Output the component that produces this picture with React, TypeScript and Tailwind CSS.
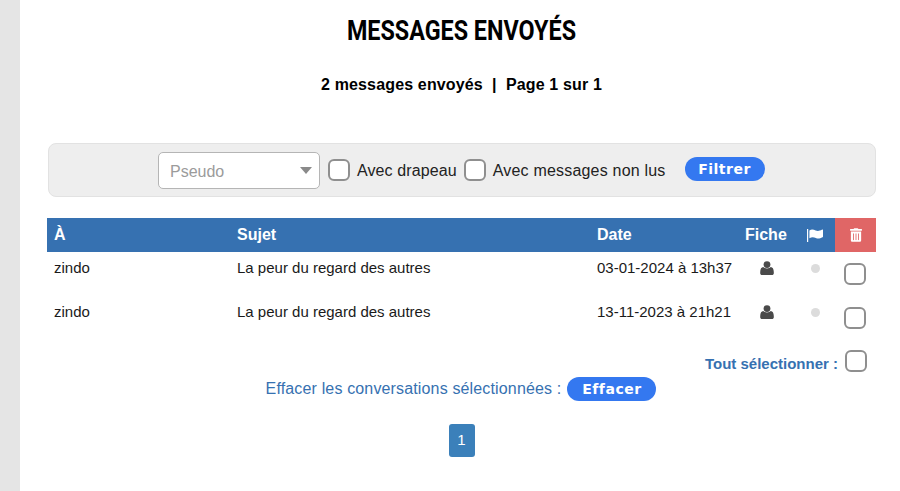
import { FaTrashAlt } from 'react-icons/fa'

const rows = [
  { to: 'zindo', subject: 'La peur du regard des autres', date: '03-01-2024 à 13h37' },
  { to: 'zindo', subject: 'La peur du regard des autres', date: '13-11-2023 à 21h21' },
]

function Check({ className = '' }: { className?: string }) {
  return (
    <span
      className={`block h-[22px] w-[22px] shrink-0 rounded-[6px] border-2 border-[#8f8f8f] bg-white ${className}`}
    />
  )
}

function PillButton({ label, width }: { label: string; width: string }) {
  return (
    <button
      className={`h-[24px] ${width} rounded-full bg-[#3478f0] text-center font-['DejaVu_Sans',sans-serif] text-[14px] font-bold leading-[24px] tracking-[0.5px] text-white`}
    >
      {label}
    </button>
  )
}

function FlagIcon() {
  return (
    <svg viewBox="0 0 16 13" className="h-[13px] w-[16px]" fill="currentColor">
      <rect x="0" y="0" width="1.2" height="13" />
      <path d="M2.4 1.4c2.6-1.6 4.4-.6 6.2.1 2 .8 3.8.7 6.6-.9.5-.3.8 0 .8.4v6.4c0 .4-.2.6-.5.8-2.8 1.7-4.8 1.6-6.7.8-1.8-.7-3.6-1.4-6.4.2z" />
    </svg>
  )
}

function UserIcon() {
  return (
    <svg viewBox="0 0 14 14" className="h-[14px] w-[14px] text-[#4a4a4a]" fill="currentColor">
      <circle cx="7" cy="3.6" r="3.4" />
      <path d="M0.2 11c0-3.2 1.3-4.8 3-5 .9.9 2.2 1.4 3.8 1.4s2.9-.5 3.8-1.4c1.7.2 3 1.8 3 5v1.2c0 1-.8 1.8-1.8 1.8H2c-1 0-1.8-.8-1.8-1.8z" />
    </svg>
  )
}

export default function App() {
  return (
    <div className="flex h-[491px] w-[900px] overflow-hidden bg-white font-['Liberation_Sans',Arial,sans-serif] text-black">
      <div className="w-[20px] shrink-0 bg-[#e5e5e5]" />

      <main className="flex w-[856px] flex-col pl-[27px]">
        <h1 className="mt-[15px] h-[32px] w-[829px] scale-x-[0.833] text-center font-['Roboto',sans-serif] text-[28px] font-bold leading-[32px]">
          MESSAGES ENVOYÉS
        </h1>

        <p className="mt-[29px] h-[18px] w-[829px] text-center text-[16px] font-bold leading-[18px] tracking-[0.15px]">
          2 messages envoyés&nbsp; |&nbsp; Page 1 sur 1
        </p>

        <form className="mt-[49px] ml-[1px] flex h-[54px] w-[828px] items-center rounded-[8px] border-[1.5px] border-[#e2e2e2] bg-[#eeeeee] pl-[109px]">
          <div className="flex h-[37px] w-[162px] items-center justify-between rounded-[5px] border-[1.5px] border-[#b5b5b5] bg-white pl-[11px] pr-[7px]">
            <span className="pt-[3px] text-[16px] text-[#9b9b9b]">Pseudo</span>
            <span className="h-0 w-0 border-x-[6px] border-t-[7px] border-x-transparent border-t-[#8a8a8a]" />
          </div>
          <Check className="ml-[8px]" />
          <span className="ml-[7px] pt-[1px] text-[16px] tracking-[0.1px] text-[#222222]">Avec drapeau</span>
          <Check className="ml-[7px]" />
          <span className="ml-[7px] pt-[1px] text-[16px] tracking-[0.2px] text-[#222222]">Avec messages non lus</span>
          <div className="mb-[3px] ml-[19px] flex">
            <PillButton label="Filtrer" width="w-[80px]" />
          </div>
        </form>

        <table className="mt-[21px] w-[829px] table-fixed border-collapse text-[15px]">
          <colgroup>
            <col className="w-[183px]" />
            <col className="w-[360px]" />
            <col className="w-[148px]" />
            <col className="w-[52px]" />
            <col className="w-[45px]" />
            <col className="w-[41px]" />
          </colgroup>
          <thead>
            <tr className="h-[34px] bg-[#3671b1] text-left text-[16px] font-bold text-white">
              <th className="pl-[7px]">À</th>
              <th className="pl-[7px]">Sujet</th>
              <th className="pl-[7px]">Date</th>
              <th className="pl-[7px]">Fiche</th>
              <th className="pl-[17px]">
                <FlagIcon />
              </th>
              <th className="bg-[#e06666]">
                <FaTrashAlt className="mx-auto h-[14px] w-[12px]" />
              </th>
            </tr>
          </thead>
          <tbody>
            {rows.map((row) => (
              <tr key={row.date} className="h-[44px] text-[#1a1a1a]">
                <td className="pb-[11px] pl-[7px]">{row.to}</td>
                <td className="pb-[11px] pl-[7px]">{row.subject}</td>
                <td className="pb-[11px] pl-[7px]">{row.date}</td>
                <td className="pb-[13px] pl-[22px]">
                  <UserIcon />
                </td>
                <td className="pb-[11px]">
                  <span className="ml-[21px] block h-[9px] w-[9px] rounded-full bg-[#dcdcdc]" />
                </td>
                <td>
                  <Check className="ml-[9px]" />
                </td>
              </tr>
            ))}
          </tbody>
        </table>

        <div className="mt-[10px] flex h-[22px] w-[820px] justify-end gap-[7px]">
          <span className="pt-[3px] text-[15px] font-bold text-[#3671b1]">Tout sélectionner :</span>
          <Check />
        </div>

        <div className="mt-[5px] flex h-[24px] w-[829px] items-center justify-center gap-[6px] pr-[1px]">
          <span className="text-[16px] tracking-[0.15px] text-[#3671b1]">
            Effacer les conversations sélectionnées :
          </span>
          <PillButton label="Effacer" width="w-[89px]" />
        </div>

        <div className="mt-[23px] flex w-[829px] justify-center">
          <a className="flex h-[33px] w-[26px] items-center justify-center rounded-[3px] bg-[#3b80ba] text-[15px] text-white">
            1
          </a>
        </div>
      </main>
    </div>
  )
}
